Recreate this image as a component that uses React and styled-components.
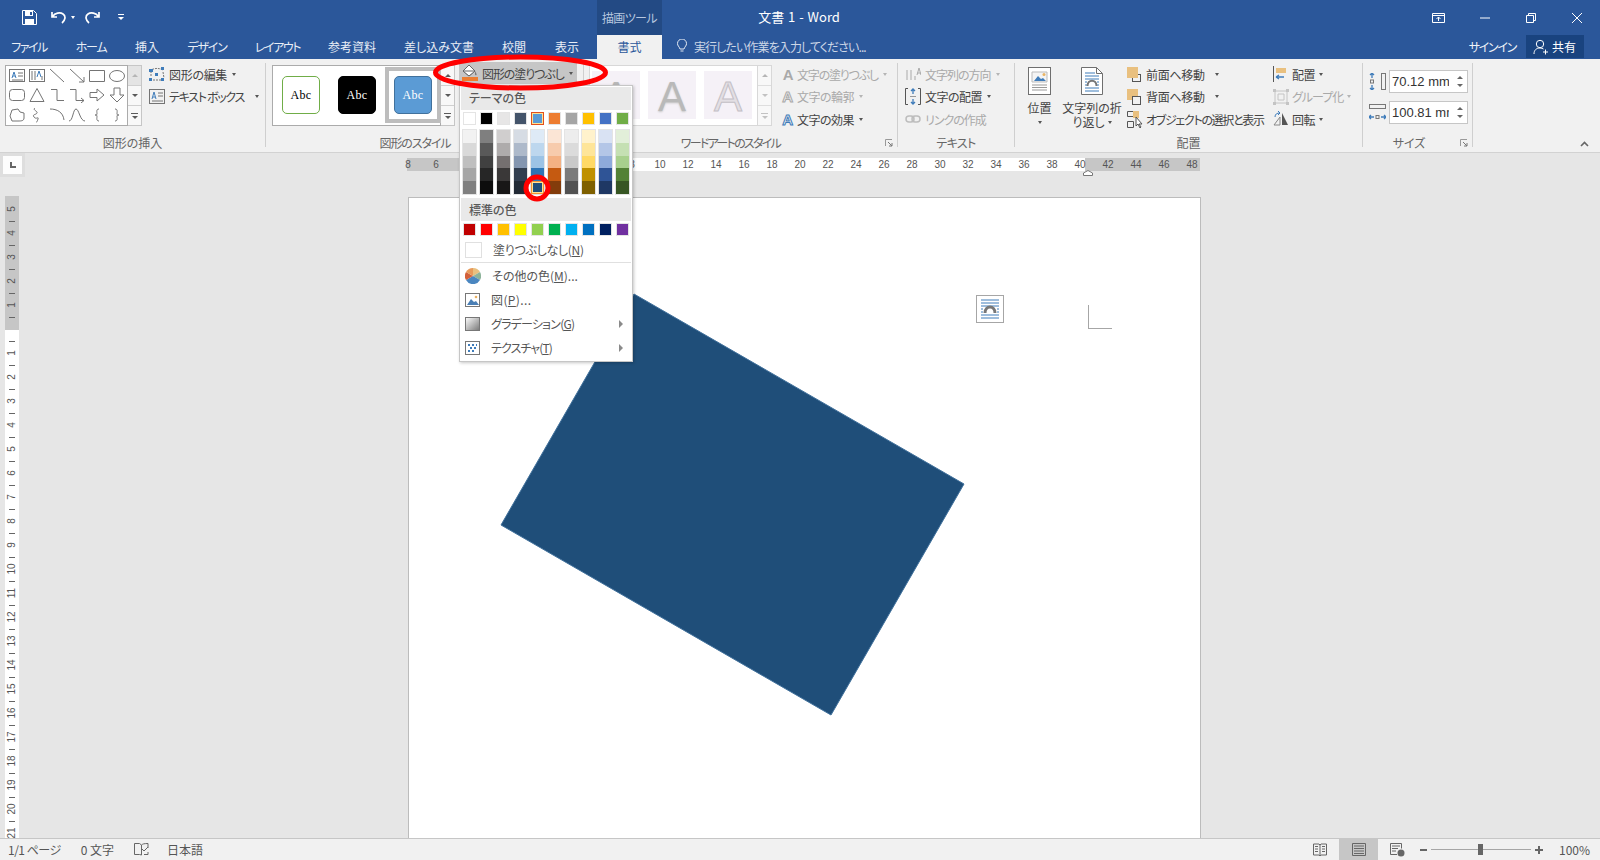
import React from "react";
import styled, { createGlobalStyle } from "styled-components";

const Global = createGlobalStyle`
  html, body { margin: 0; padding: 0; width: 1600px; height: 860px; overflow: hidden; }
  body { font-family: "Noto Sans CJK JP", "Liberation Sans", sans-serif; font-size: 12px; font-feature-settings: "palt"; color: #444; }
  * { box-sizing: border-box; }
`;

const Root = styled.div`position: relative; width: 1600px; height: 860px; display: flex; flex-direction: column; overflow: hidden; background: #e6e6e6;`;
const Icon = styled.svg`display: block; flex: none; fill: none;`;

/* ---------- title bar ---------- */
const TitleBar = styled.div`height: 35px; background: #2b579a; display: flex; align-items: stretch; color: #fff; flex: none;`;
const QuickAccess = styled.div`width: 597px; flex: none; display: flex; align-items: center; padding-left: 22px;`;
const Qa = styled.span`display: block; margin-left: ${p => p.$ml}px;`;
const ContextHead = styled.div`width: 65px; flex: none; background: #234a84; color: #b7c7df; display: flex; align-items: center; justify-content: center; font-size: 12px; letter-spacing: -.6px;`;
const DocTitle = styled.div`width: 274px; flex: none; display: flex; align-items: center; justify-content: center; font-size: 13px; color: #fff; padding-bottom: 2px; word-spacing: 1px;`;
const WindowControls = styled.div`margin-left: auto; padding-right: 18px; display: flex; align-items: center;`;
const WinBtn = styled.span`display: block; margin-left: ${p => p.$ml}px;`;

/* ---------- tab row ---------- */
const TabRow = styled.div`height: 24px; flex: none; background: #2b579a; display: flex; align-items: stretch;`;
const Tab = styled.div`width: ${p => p.$w}px; flex: none; display: flex; align-items: center; justify-content: center; color: #e9eef6; font-size: 12px; white-space: nowrap; padding-bottom: 2px; letter-spacing: ${p => p.$ls || 0}px;`;
const ActiveTab = styled.div`width: 65px; margin-left: 6px; flex: none; background: #f1f1f1; color: #2b579a; display: flex; align-items: center; justify-content: center; font-size: 12px; padding-bottom: 2px;`;
const TellMe = styled.div`display: flex; align-items: center; padding: 0 0 2px 15px; gap: 7px; color: #ccd6e6; font-size: 12px; white-space: nowrap; letter-spacing: -.9px;`;
const SignIn = styled.div`margin-left: auto; display: flex; align-items: center; color: #f0f3f8; font-size: 12px;`;
const SignInText = styled.span`display: block; padding-bottom: 2px; letter-spacing: -1.3px;`;
const ShareBtn = styled.div`align-self: stretch; margin: 0 16px 1px 10px; width: 58px; background: #19437f; color: #fff; display: flex; align-items: center; gap: 3px; padding-left: 7px; font-size: 12px;`;

/* ---------- ribbon ---------- */
const Ribbon = styled.div`height: 94px; flex: none; background: #f1f1f1; border-bottom: 1px solid #d2d2d2; display: flex; padding-top: 4px;`;
const Group = styled.div`width: ${p => p.$w}px; height: 84px; flex: none; border-right: 1px solid #cfcfcf; display: flex; flex-direction: column;`;
const GroupBody = styled.div`height: 70px; flex: none; display: flex; align-items: flex-start; padding: 1px 0 0 ${p => p.$pl || 0}px;`;
const GroupLabel = styled.div`height: 20px; line-height: 20px; text-align: center; color: #666; font-size: 12px; padding-right: ${p => p.$pr || 0}px; position: relative; white-space: nowrap; letter-spacing: ${p => p.$ls || 0}px;`;
const Launcher = styled.span`position: absolute; right: 4px; top: 6px; display: block;`;
const Collapse = styled.div`margin: 78px 11px 0 auto;`;

const Gallery = styled.div`
  display: flex; flex: none; width: ${p => p.$w}px; height: 61px; margin-top: 1px; margin-left: ${p => p.$ml || 0}px;
  background: #fff; border: 1px solid ${p => p.$muted ? "#d8d8d8" : "#ababab"};
  ${p => p.$pad && `padding: ${p.$pad};`}
  ${p => p.$gap && `gap: ${p.$gap}px;`}
`;
const ShapeGrid = styled.div`display: grid; grid-template-columns: repeat(6, 20px); grid-auto-rows: 19.6px; justify-items: center; align-items: center; padding-left: 1px;`;
const ScrollCol = styled.div`width: 14px; height: 61px; margin-top: 1px; flex: none; display: flex; flex-direction: column; border: 1px solid ${p => p.$muted ? "#d8d8d8" : "#c6c6c6"}; border-left: none;`;
const ScrollBtn = styled.div`
  flex: 1; display: flex; flex-direction: column; gap: 2px; align-items: center; justify-content: center;
  background: ${p => p.$off ? "#e4e4e4" : "#f8f8f8"};
  border-bottom: 1px solid ${p => p.$muted ? "#dedede" : "#d0d0d0"};
  &:last-child { border-bottom: none; }
`;
const ScrollLine = styled.i`display: block; width: 7px; height: 1px; background: ${p => p.$c};`;
const Tri = styled.i`display: block; width: 0; height: 0; border-left: 3px solid transparent; border-right: 3px solid transparent;
  ${p => p.$up ? `border-bottom: 3px solid ${p.$c};` : `border-top: 3px solid ${p.$c};`}`;

const Commands = styled.div`display: flex; flex-direction: column; flex: none; margin: -1px 0 0 ${p => p.$ml || 0}px; width: ${p => p.$w ? p.$w + "px" : "auto"};`;
const Cmd = styled.div`height: 22.5px; display: flex; align-items: center; gap: ${p => p.$gap ?? 4}px; white-space: nowrap; color: ${p => p.$off ? "#a9a9a9" : "#444"}; font-size: 12px; letter-spacing: ${p => p.$ls ?? -0.5}px;`;
const Caret = styled.i`display: block; flex: none; width: 0; height: 0; margin-left: ${p => p.$ml ?? 1}px; border-left: 2.5px solid transparent; border-right: 2.5px solid transparent; border-top: 3px solid ${p => p.$off ? "#b5b5b5" : "#555"};`;

const StyleItem = styled.div`width: 56px; height: 56px; flex: none; display: flex; align-items: center; justify-content: center; border: 4px solid ${p => p.$sel ? "#bdbdbd" : "transparent"};`;
const AbcBox = styled.div`width: 38px; height: 38px; border-radius: 5px; background: ${p => p.$bg}; border: 1px solid ${p => p.$line}; color: ${p => p.$fg}; font: 12px "Liberation Serif", serif; display: flex; align-items: center; justify-content: center; letter-spacing: .3px;`;
const FillBtn = styled.div`width: 118px; height: 22px; margin: -2px 0 0 4px; background: #c6c6c6; display: flex; align-items: center; gap: 4px; padding-left: 3px; font-size: 12px; color: #444; white-space: nowrap; letter-spacing: -1.1px;`;

const ArtTile = styled.div`width: 48px; height: 48px; flex: none; background: #f5f1f7; overflow: hidden; display: flex; align-items: center; justify-content: center; padding-top: 3px; font: 42px/48px "Liberation Sans", sans-serif;
  color: ${p => p.$kind === "outline" ? "#e3dfe4" : "#b9b9b9"};
  ${p => p.$kind === "outline" ? "-webkit-text-stroke: 1px #c4c0c6;" : "text-shadow: 0 1px 2px #c8c8c8;"}`;
const ArtLetter = styled.span`display: block; width: 13px; margin-right: -1px; text-align: center; font: bold 15px/15px "Liberation Sans", sans-serif; color: ${p => p.$c};
  ${p => p.$outline && `color: #f1f1f1; -webkit-text-stroke: 1px ${p.$outline};`}`;

const BigBtn = styled.div`width: ${p => p.$w}px; flex: none; display: flex; flex-direction: column; align-items: center; padding-top: 3px; white-space: nowrap; font-size: 12px; line-height: 14px; color: #444;`;
const BigIcon = styled.div`height: 28px; margin-bottom: 6px;`;
const BigLine = styled.div`display: flex; align-items: center; justify-content: center; height: 14px; gap: 2px;`;

const SizeCol = styled.div`display: flex; flex-direction: column; gap: 8px; padding-top: 6px;`;
const SizeRow = styled.div`display: flex; align-items: center; gap: 3px;`;
const SizeInput = styled.div`width: 79px; height: 23px; background: #fff; border: 1px solid #c6c6c6; display: flex; align-items: center; padding-left: 2px; font: 13px "Liberation Sans", sans-serif; color: #333;`;
const SizeValue = styled.div`width: 57px; overflow: hidden; white-space: nowrap;`;
const Spin = styled.div`margin-left: 8px; display: flex; flex-direction: column; gap: 5px;`;

/* ---------- workspace ---------- */
const Workspace = styled.div`flex: 1; min-height: 0; display: flex; overflow: hidden; background: #e6e6e6;`;
const LeftCol = styled.div`width: 25px; flex: none; display: flex; flex-direction: column;`;
const Corner = styled.div`width: 25px; height: 24px; flex: none; background: #dedede; padding: 3px; `;
const CornerInner = styled.div`width: 19px; height: 18px; background: #fdfdfd; display: flex; align-items: center; justify-content: center;`;
const VRuler = styled.div`margin: 19px 0 0 5px; width: 14px; height: 642px; flex: none; padding-top: 7px; background: linear-gradient(#c6c6c6 0 134px, #fff 134px); display: flex; flex-direction: column; overflow: hidden;`;
const VCell = styled.div`height: 12px; flex: none; display: flex; align-items: center; justify-content: center;`;
const VNum = styled.span`display: block; font: 10px/10px "Liberation Sans", sans-serif; color: #555; transform: rotate(-90deg); white-space: nowrap;`;
const VTick = styled.i`display: block; width: 6px; height: 1px; background: #666;`;
const MainCol = styled.div`flex: 1; padding-left: 382px; display: flex; flex-direction: column; min-width: 0;`;
const HRuler = styled.div`position: relative; margin-top: 5px; width: 793px; height: 13px; flex: none; display: flex; background: linear-gradient(90deg, #c6c6c6 0 113px, #fff 113px 678px, #c6c6c6 678px);`;
const HCells = styled.div`display: flex; margin-left: -13px;`;
const HCell = styled.div`width: 28px; flex: none; text-align: center; font: 10px/13px "Liberation Sans", sans-serif; color: #555;`;
const Indent = styled.svg`position: absolute; left: 676px; top: 12px; display: block;`;
const Page = styled.div`position: relative; margin: 26px 0 0 1px; width: 793px; height: 670px; flex: none; background: #fff; border: 1px solid #bcbcbc;`;
const ShapeCanvas = styled.svg`position: absolute; left: 0; top: 0; display: block;`;
const LayoutOption = styled.div`position: absolute; left: 567px; top: 97px; width: 28px; height: 28px; background: #fff; border: 1px solid #a6a6a6; display: flex; align-items: center; justify-content: center;`;
const MarginMark = styled.div`position: absolute; left: 679px; top: 107px; width: 24px; height: 24px; border-left: 1px solid #a6a6a6; border-bottom: 1px solid #a6a6a6;`;

/* ---------- status bar ---------- */
const StatusBar = styled.div`height: 22px; flex: none; background: #f1f1f1; border-top: 1px solid #c6c6c6; display: flex; align-items: stretch; color: #555; font-size: 12px;`;
const StatusText = styled.div`display: flex; align-items: center; margin-left: ${p => p.$ml}px; white-space: nowrap; letter-spacing: ${p => p.$ls || 0}px;`;
const StatusRight = styled.div`margin-left: auto; display: flex; align-items: stretch;`;
const ViewBtn = styled.div`width: 39px; display: flex; align-items: center; justify-content: center; background: ${p => p.$on ? "#c6c6c6" : "transparent"};`;
const Zoom = styled.div`display: flex; align-items: center; margin-left: 3px;`;
const ZoomTrack = styled.div`position: relative; width: 100px; height: 1px; margin: 0 4px; background: #a6a6a6;`;
const ZoomThumb = styled.i`position: absolute; left: 47px; top: -5px; width: 5px; height: 11px; background: #666;`;
const ZoomPct = styled.div`font-size: 12px; color: #555; width: 57px; padding-left: 16px; display: flex; align-items: center;`;

/* ---------- menu ---------- */
const Menu = styled.div`position: absolute; left: 459px; top: 85px; width: 174px; height: 277px; z-index: 5; background: #fff; border: 1px solid #c6c6c6; box-shadow: 1px 1px 3px rgba(0,0,0,.22); padding: 1px 1px 0; display: flex; flex-direction: column;`;
const MenuHead = styled.div`height: 23px; flex: none; margin-top: ${p => p.$mt}px; background: #e9e9e9; color: #595959; font-weight: 500; padding: 0 0 ${p => p.$pb}px 8px; display: flex; align-items: center; font-size: 12px;`;
const Swatches = styled.div`display: flex; gap: 4px; margin: 2px 0 0 2px; flex: none;`;
const Swatch = styled.i`display: block; width: 13px; height: 13px; flex: none; background: ${p => p.$c}; border: 1px solid ${p => p.$sel ? "#e2501c" : "#e4e4e4"}; ${p => p.$sel && "box-shadow: inset 0 0 0 1px #ffe294;"}`;
const Shades = styled.div`display: flex; gap: 4px; margin: 5px 0 0 2px; flex: none;`;
const ShadeCol = styled.div`width: 13px; height: 64px; flex: none; display: flex; flex-direction: column; box-shadow: 0 0 0 1px #e4e4e4; position: relative;`;
const Shade = styled.i`display: block; flex: 1; background: ${p => p.$c}; ${p => p.$sel && "box-shadow: inset 0 0 0 1px #f29436, inset 0 0 0 2px #ffe294;"}`;
const NoneRow = styled.div`height: 18px; margin-top: 5px; flex: none; display: flex; align-items: center; padding-left: 4px; gap: 11px; color: #555;`;
const NoneBox = styled.i`display: block; width: 17px; height: 16px; background: #fff; border: 1px solid #e0e0e0;`;
const MenuSep = styled.div`height: 1px; margin-top: 3px; flex: none; background: #e0e0e0;`;
const MenuRows = styled.div`margin-top: 1px; display: flex; flex-direction: column;`;
const MenuRow = styled.div`height: 24px; display: flex; align-items: center; padding: 0 8px 0 4px; gap: 11px; color: #555; white-space: nowrap;`;
const MenuLabel = styled.span`display: block; padding-bottom: 2px; letter-spacing: ${p => p.$ls || 0}px;`;
const MenuArrow = styled.i`display: block; margin-left: auto; width: 0; height: 0; border-left: 4px solid #8a8a8a; border-top: 4px solid transparent; border-bottom: 4px solid transparent;`;
const Ul = styled.span`text-decoration: underline;`;

const OvalMark = styled.svg`position: absolute; left: 428px; top: 50px; z-index: 6; display: block; pointer-events: none;`;
const RingMark = styled.svg`position: absolute; left: 522px; top: 173px; z-index: 6; display: block; pointer-events: none;`;

/* ---------- drawings ---------- */
const G = "#747474", BL = "#3f7cba", PE = "#e9c07f";
const S = ({ children, w = 16, h = 16 }) => <Icon width={w} height={h} viewBox={`0 0 ${w} ${h}`}>{children}</Icon>;
const Shape = ({ d, fill }) => <S><path d={d} stroke={G} fill={fill || "none"} /></S>;

const galleryShapes = [
  <S key="a"><rect x=".5" y="1.5" width="15" height="12" stroke={G} /><path d="M3 10 5 4l2 6M4 8h2" stroke={BL} /><path d="M9 5h5M9 8h5M3 12h11" stroke={G} /></S>,
  <S key="b"><rect x=".5" y="1.5" width="15" height="12" stroke={G} /><path d="M3 3v9M6 3v9M13 8v4" stroke={G} /><path d="M8 9 10 3l2 6" stroke={BL} /></S>,
  <Shape key="c" d="M1 1 15 14" />,
  <Shape key="d" d="M1 1 15 14M15 14v-5M15 14h-5" />,
  <Shape key="e" d="M.5 2.5h15v11H.5z" />,
  <S key="f"><ellipse cx="8" cy="8" rx="7.5" ry="5.5" stroke={G} /></S>,
  <S key="g"><rect x=".5" y="2.5" width="15" height="11" rx="3" stroke={G} /></S>,
  <Shape key="h" d="M8 1.5 15 14.5H1Z" />,
  <Shape key="i" d="M2 2.5h6v11h7" />,
  <Shape key="j" d="M1 2.5h6v11h8M12 11l3 2.5-3 2.5" />,
  <Shape key="k" d="M1 5.5h7V2l7 6-7 6v-3.5H1Z" />,
  <Shape key="l" d="M5 1h6v7h4l-7 7-7-7h4Z" />,
  <Shape key="m" d="M3 3 9 2l2 3 4 1v5c0 3-3 3-6 3H3L1 9Z" />,
  <Shape key="n" d="M6 1C3 3 9 4 8 6S3 7 5 10s5-1 4 2-1 3-2 3" />,
  <Shape key="o" d="M1 2c7 0 13 3 14 11" />,
  <Shape key="p" d="M0 14C4 14 4 2 7 2s4 12 9 12" />,
  <Shape key="q" d="M10 2C7 2 8 5 8 7c0 1-1 1-2 1 1 0 2 0 2 1 0 2-1 5 2 5" />,
  <Shape key="r" d="M6 2c3 0 2 3 2 5 0 1 1 1 2 1-1 0-2 0-2 1 0 2 1 5-2 5" />,
];

const SaveIcon = () => <Icon width="15" height="15" viewBox="0 0 15 15"><path d="M.5.5h11l3 3v11H.5Z" stroke="#fff" /><path d="M3 1h8v5H3ZM3 9h9v5H3Z" fill="#fff" /><path d="M8 2h2v3H8Z" fill="#2b579a" /></Icon>;
const UndoIcon = () => <Icon width="15" height="13" viewBox="0 0 15 13"><path d="M1 1v5h5M1.5 5.5C4 2 9 1 12 3s2.5 6-1 9" stroke="#fff" strokeWidth="1.7" /></Icon>;
const RedoIcon = () => <Icon width="15" height="13" viewBox="0 0 15 13"><path d="M14 1v5H9M13.5 5.5C11 2 6 1 3 3S.5 9 4 12" stroke="#fff" strokeWidth="1.7" /></Icon>;
const WhiteCaret = styled.i`display: block; width: 0; height: 0; border-left: 2.5px solid transparent; border-right: 2.5px solid transparent; border-top: 3px solid #fff;`;
const CustomIcon = () => <Icon width="6" height="7" viewBox="0 0 6 7"><path d="M0 .5h6" stroke="#fff" /><path d="M0 3h6L3 6Z" fill="#fff" /></Icon>;
const Bulb = () => <Icon width="10" height="14" viewBox="0 0 10 14"><path d="M3 10C2 7 .5 7 .5 4.5a4.5 4.5 0 0 1 9 0C9.500 7 8 7 7 10ZM3.500 12h3" stroke="#e4eaf3" /></Icon>;
const PersonIcon = () => <Icon width="16" height="16" viewBox="0 0 16 16"><circle cx="7" cy="5" r="3.700" stroke="#fff" /><path d="M1 15c0-4 2.500-6 6-6 1.500 0 2.500.5 3.500 1M10 13h5M12.500 10.500v5" stroke="#fff" /></Icon>;

const EditShape = () => <S h={15}><path d="M3 2.500C7 1 10 1 14 3M2 4v6M14 5l1 6M4 13h9" stroke={G} strokeDasharray="2 1" /><path d="M0 2h4v3H0zM12 0h3v3h-3zM0 11h3v3H0zM12 11h3v3h-3zM6 6h3v3H6z" fill={BL} /></S>;
const TextBoxIcon = () => <S h={15}><rect x=".5" y=".5" width="15" height="14" stroke={G} /><path d="M3 10 5 3l2 7M4 8h2" stroke={BL} /><path d="M9 4h5M9 7h5M3 12h11" stroke={G} /></S>;
const BucketIcon = () => <Icon width="16" height="16" viewBox="0 0 16 16"><path d="M7 0 13 6 7 11 1 6Z" fill="#fff" stroke="#666" /><path d="M1 6h12l-6 5Z" fill="#fff" stroke="#666" /><path d="M13 6c1 2 2 3 1.500 4-.6.6-1.500 0-1.500-1Z" fill="#777" /><path d="M0 12h16v4H0Z" fill="#ed7d31" /></Icon>;

const DirIcon = ({ c = "#a9a9a9" }) => <S><path d="M2 4v10M6 4v10M10 10v4" stroke={c} /><path d="M12 9l2-7 2 7M12.500 7h3" stroke={c} /></S>;
const AlignIcon = () => <S h={17}><path d="M3 .5H.5v16H3M13 .5h2.500v16H13" stroke="#555" /><path d="M8 1v5M6 3l2-2 2 2M8 11v5M6 14l2 2 2-2" stroke={BL} strokeWidth="1.300" /><path d="M5 8.500h6" stroke="#999" /></S>;
const LinkIcon = () => <S h={12}><rect x="1" y="3" width="8" height="6" rx="3" stroke="#bdbdbd" strokeWidth="1.500" /><rect x="7" y="3" width="8" height="6" rx="3" stroke="#bdbdbd" strokeWidth="1.500" /></S>;

const PositionIcon = () => <Icon width="23" height="28" viewBox="0 0 23 28"><rect x=".5" y=".5" width="22" height="27" fill="#fff" stroke="#6f6f6f" /><path d="M4 5h15v10H4Z" fill="#f4f4f4" stroke="#bbb" /><path d="M6 14l4-5 3 3 2-1 3 3Z" fill={BL} /><circle cx="16" cy="7.500" r="1.500" fill="#eab464" /><path d="M4 18h15M4 20.500h15M4 23h15" stroke="#9a9a9a" /></Icon>;
const WrapIcon = () => <Icon width="22" height="28" viewBox="0 0 22 28"><path d="M.5.5h15l6 6v21H.5Z" fill="#fff" stroke="#6f6f6f" /><path d="M15.500.5v6h6" stroke="#6f6f6f" /><path d="M4 6h10M4 9h14M4 12h14M4 15h2M16 15h2M4 18h2M16 18h2M4 21h14M4 24h14" stroke={BL} /><path d="M6.500 19c0-7 9-7 9 0" stroke="#777" strokeWidth="2" /></Icon>;
const FrontIcon = () => <S h={15}><rect x="5.500" y="7.500" width="8" height="7" fill="none" stroke="#555" /><rect x="0" y="0" width="11" height="11" fill={PE} /></S>;
const BackIcon = () => <S h={16}><rect x="0" y="0" width="11" height="11" fill={PE} /><rect x="5.500" y="7.500" width="8" height="8" fill="#f1f1f1" stroke="#555" /></S>;
const SelectIcon = () => <S h={17}><path d="M.5.5h6v5h-6ZM.5 10.500h6v6h-6Z" stroke="#555" /><path d="M6 0h6v7H6Z" fill={PE} /><path d="M9 6v9l2-2 2 4 1-1-2-3h3Z" fill="#fff" stroke="#555" /></S>;
const ArrangeIcon = () => <S><path d="M.5 0v16" stroke="#555" /><path d="M3 2h10v5H3Z" fill={PE} /><path d="M3 11h8M3 11l3-2M3 11l3 2" stroke={BL} strokeWidth="1.300" /></S>;
const GroupIcon = () => <S><path d="M2 3v10M14 3v10M3 2h10M3 14h10" stroke="#c4c4c4" /><path d="M0 0h3v3H0zM13 0h3v3h-3zM0 13h3v3H0zM13 13h3v3h-3z" fill="#c4c4c4" /><path d="M5 5h6v6H5Z" stroke="#c4c4c4" /></S>;
const RotateIcon = () => <S><path d="M1 14 7 6v8Z" stroke="#888" /><path d="M9 2v12h6Z" fill="#555" /><path d="M2 6c0-3 2-4 5-4M5 0l2 2-2 2" stroke={BL} /></S>;
const HeightIcon = () => <Icon width="17" height="17" viewBox="0 0 17 17"><rect x="12.500" y=".5" width="4" height="16" stroke="#777" /><path d="M3 0v5M1 2l2-2 2 2M3 12v5M1 15l2 2 2-2" stroke={BL} strokeWidth="1.300" /><rect x="1.500" y="7" width="3" height="3" stroke="#777" /></Icon>;
const WidthIcon = () => <Icon width="17" height="17" viewBox="0 0 17 17"><rect x=".5" y=".5" width="16" height="4" stroke="#777" /><path d="M0 13h5M2 11l-2 2 2 2M12 13h5M15 11l2 2-2 2" stroke={BL} strokeWidth="1.300" /><rect x="7" y="11.500" width="3" height="3" stroke="#777" /></Icon>;
const LauncherIcon = () => <Icon width="8" height="8" viewBox="0 0 8 8"><path d="M.5 7V.5H7" stroke="#999" /><path d="M3 3l4 4M7 4v3H4" stroke="#777" /></Icon>;

const PieIcon = () => <Icon width="16" height="16" viewBox="0 0 16 16"><path d="M8 8V0A8 8 0 0 1 15 4Z" fill="#e9c07f" /><path d="M8 8l7-4a8 8 0 0 1 0 8Z" fill="#8db39a" /><path d="M8 8l7 4a8 8 0 0 1-14 0Z" fill="#4a86c0" /><path d="M8 8l-7 4a8 8 0 0 1 0-8Z" fill="#d2603a" /><path d="M8 8 1 4a8 8 0 0 1 7-4Z" fill="#e89a5a" /></Icon>;
const PicIcon = () => <Icon width="15" height="14" viewBox="0 0 15 14"><rect x=".5" y=".5" width="14" height="13" fill="#fff" stroke="#777" /><path d="M2 12 6 6l3 3 2-1 3 4Z" fill="#4a7fb5" /><circle cx="11" cy="4" r="1.300" fill="#e9b060" /></Icon>;
const GradIcon = () => <Icon width="15" height="14" viewBox="0 0 15 14"><defs><linearGradient id="gd" x1="0" y1="0" x2="1" y2="1"><stop offset="0" stopColor="#fff" /><stop offset="1" stopColor="#777" /></linearGradient></defs><rect x=".5" y=".5" width="14" height="13" fill="url(#gd)" stroke="#777" /></Icon>;
const TexIcon = () => <Icon width="15" height="14" viewBox="0 0 15 14"><rect x=".5" y=".5" width="14" height="13" fill="#fff" stroke="#777" /><path d="M3 3h2v2H3zM7 3h2v2H7zM11 3h1v2h-1zM5 6h2v2H5zM9 6h2v2H9zM3 9h2v2H3zM7 9h2v2H7z" fill="#3f7cba" /></Icon>;

const themeColors = ["#ffffff", "#000000", "#e7e6e6", "#44546a", "#5b9bd5", "#ed7d31", "#a5a5a5", "#ffc000", "#4472c4", "#70ad47"];
const shadeColors = [
  ["#f2f2f2", "#d9d9d9", "#bfbfbf", "#a6a6a6", "#808080"],
  ["#7f7f7f", "#595959", "#404040", "#262626", "#0d0d0d"],
  ["#d0cece", "#aeabab", "#757070", "#3a3838", "#181717"],
  ["#d6dce4", "#adb9ca", "#8496b0", "#323e4f", "#222a35"],
  ["#deeaf6", "#bdd7ee", "#9cc3e5", "#2e75b5", "#1f4e79"],
  ["#fbe5d5", "#f7cbac", "#f4b183", "#c55a11", "#833c0b"],
  ["#ededed", "#dbdbdb", "#c9c9c9", "#7b7b7b", "#525252"],
  ["#fff2cc", "#fee599", "#ffd965", "#bf9000", "#7f6000"],
  ["#d9e2f3", "#b4c6e7", "#8eaadb", "#2f5496", "#1f3864"],
  ["#e2efd9", "#c5e0b3", "#a8d08d", "#538135", "#375623"],
];
const standardColors = ["#c00000", "#ff0000", "#ffc000", "#ffff00", "#92d050", "#00b050", "#00b0f0", "#0070c0", "#002060", "#7030a0"];

const tabs = [["ファイル", 58, -1.5], ["ホーム", 66, -1.2], ["挿入", 46, 0], ["デザイン", 74, -1.2], ["レイアウト", 67, -1.4], ["参考資料", 82, 0], ["差し込み文書", 92, 0], ["校閲", 58, 0], ["表示", 48, 0]];

const hNums = [8, 6, 4, 2, ""].concat(Array.from({ length: 24 }, (_, i) => (i + 1) * 2));
const vItems = [];
[5, 4, 3, 2, 1].forEach(n => { vItems.push(n); vItems.push("-"); });
vItems.push("");
for (let n = 1; n <= 21; n++) { vItems.push("-"); vItems.push(n); }

const Scroll = ({ off, muted }) => {
  const c = muted ? "#c2c2c2" : "#5a5a5a";
  return (
    <ScrollCol $muted={muted}>
      <ScrollBtn $off={off} $muted={muted}><Tri $up $c={off || muted ? "#b5b5b5" : c} /></ScrollBtn>
      <ScrollBtn $muted={muted}><Tri $c={c} /></ScrollBtn>
      <ScrollBtn $muted={muted}><ScrollLine $c={c} /><Tri $c={c} /></ScrollBtn>
    </ScrollCol>
  );
};

export default function App() {
  return (
    <Root>
      <Global />
      <TitleBar>
        <QuickAccess>
          <SaveIcon />
          <Qa $ml={14}><UndoIcon /></Qa>
          <Qa $ml={5}><WhiteCaret /></Qa>
          <Qa $ml={10}><RedoIcon /></Qa>
          <Qa $ml={18}><CustomIcon /></Qa>
        </QuickAccess>
        <ContextHead>描画ツール</ContextHead>
        <DocTitle>文書 1 - Word</DocTitle>
        <WindowControls>
          <WinBtn $ml={0}><Icon width="13" height="10" viewBox="0 0 13 10"><path d="M.5.5h12v9H.5ZM.5 2.500h12M6.500 8V4M4.500 6l2-2 2 2" stroke="#fff" /></Icon></WinBtn>
          <WinBtn $ml={35}><Icon width="10" height="2" viewBox="0 0 10 2"><path d="M0 1h10" stroke="#fff" /></Icon></WinBtn>
          <WinBtn $ml={36}><Icon width="10" height="10" viewBox="0 0 10 10"><path d="M.5 2.500h7v7h-7ZM2.500 2.500v-2h7v7h-2" stroke="#fff" /></Icon></WinBtn>
          <WinBtn $ml={36}><Icon width="10" height="10" viewBox="0 0 10 10"><path d="M0 0l10 10M10 0 0 10" stroke="#fff" /></Icon></WinBtn>
        </WindowControls>
      </TitleBar>

      <TabRow>
        {tabs.map(([t, w, ls]) => <Tab key={t} $w={w} $ls={ls}>{t}</Tab>)}
        <ActiveTab>書式</ActiveTab>
        <TellMe><Bulb />実行したい作業を入力してください...</TellMe>
        <SignIn>
          <SignInText>サインイン</SignInText>
          <ShareBtn><PersonIcon />共有</ShareBtn>
        </SignIn>
      </TabRow>

      <Ribbon>
        <Group $w={266}>
          <GroupBody $pl={5}>
            <Gallery $w={123}>
              <ShapeGrid>{galleryShapes}</ShapeGrid>
            </Gallery>
            <Scroll off />
            <Commands $ml={7}>
              <Cmd $ls={-0.3}><EditShape />図形の編集<Caret /></Cmd>
              <Cmd $ls={-1.3}><TextBoxIcon />テキスト ボックス<Caret $ml={7} /></Cmd>
            </Commands>
          </GroupBody>
          <GroupLabel>図形の挿入</GroupLabel>
        </Group>

        <Group $w={318}>
          <GroupBody $pl={6}>
            <Gallery $w={169} $pad="1px 0 0 0">
              <StyleItem><AbcBox $bg="#fff" $line="#70ad47" $fg="#000">Abc</AbcBox></StyleItem>
              <StyleItem><AbcBox $bg="#000" $line="#000" $fg="#fff">Abc</AbcBox></StyleItem>
              <StyleItem $sel><AbcBox $bg="#5b9bd5" $line="#41719c" $fg="#fff">Abc</AbcBox></StyleItem>
            </Gallery>
            <Scroll />
            <FillBtn><BucketIcon />図形の塗りつぶし<Caret /></FillBtn>
          </GroupBody>
          <GroupLabel $pr={19} $ls={-1.1}>図形のスタイル</GroupLabel>
        </Group>

        <Group $w={314}>
          <GroupBody $pl={5}>
            <Gallery $w={169} $muted $pad="5px 0 0 2px" $gap={8}>
              <ArtTile>A</ArtTile>
              <ArtTile>A</ArtTile>
              <ArtTile $kind="outline">A</ArtTile>
            </Gallery>
            <Scroll muted />
            <Commands $ml={9}>
              <Cmd $off $ls={-1.2}><ArtLetter $c="#a9a9a9">A</ArtLetter>文字の塗りつぶし<Caret $off /></Cmd>
              <Cmd $off><ArtLetter $outline="#a9a9a9">A</ArtLetter>文字の輪郭<Caret $off /></Cmd>
              <Cmd><ArtLetter $outline="#3f7cba">A</ArtLetter>文字の効果<Caret /></Cmd>
            </Commands>
          </GroupBody>
          <GroupLabel $pr={20} $ls={-1.7}>ワードアートのスタイル<Launcher><LauncherIcon /></Launcher></GroupLabel>
        </Group>

        <Group $w={117}>
          <GroupBody $pl={7}>
            <Commands>
              <Cmd $off $ls={-1}><DirIcon />文字列の方向<Caret $off /></Cmd>
              <Cmd><AlignIcon />文字の配置<Caret /></Cmd>
              <Cmd $off $ls={-1}><LinkIcon />リンクの作成</Cmd>
            </Commands>
          </GroupBody>
          <GroupLabel $ls={-0.6}>テキスト</GroupLabel>
        </Group>

        <Group $w={348}>
          <GroupBody>
            <BigBtn $w={49}>
              <BigIcon><PositionIcon /></BigIcon>
              <BigLine>位置</BigLine>
              <BigLine><Caret $ml={0} /></BigLine>
            </BigBtn>
            <BigBtn $w={56}>
              <BigIcon><WrapIcon /></BigIcon>
              <BigLine>文字列の折</BigLine>
              <BigLine>り返し<Caret /></BigLine>
            </BigBtn>
            <Commands $ml={7} $w={146}>
              <Cmd $gap={3} $ls={-0.3}><FrontIcon />前面へ移動<Caret $ml={7} /></Cmd>
              <Cmd $gap={3} $ls={-0.3}><BackIcon />背面へ移動<Caret $ml={7} /></Cmd>
              <Cmd $gap={3} $ls={-1.3}><SelectIcon />オブジェクトの選択と表示</Cmd>
            </Commands>
            <Commands>
              <Cmd $gap={3}><ArrangeIcon />配置<Caret /></Cmd>
              <Cmd $off $gap={3} $ls={-1}><GroupIcon />グループ化<Caret $off /></Cmd>
              <Cmd $gap={3}><RotateIcon />回転<Caret /></Cmd>
            </Commands>
          </GroupBody>
          <GroupLabel>配置</GroupLabel>
        </Group>

        <Group $w={110}>
          <GroupBody $pl={6}>
            <SizeCol>
              <SizeRow><HeightIcon /><SizeInput><SizeValue>70.12 mm</SizeValue><Spin><Tri $up $c="#666" /><Tri $c="#666" /></Spin></SizeInput></SizeRow>
              <SizeRow><WidthIcon /><SizeInput><SizeValue>100.81 mm</SizeValue><Spin><Tri $up $c="#666" /><Tri $c="#666" /></Spin></SizeInput></SizeRow>
            </SizeCol>
          </GroupBody>
          <GroupLabel $pr={17}>サイズ<Launcher><LauncherIcon /></Launcher></GroupLabel>
        </Group>

        <Collapse><Icon width="9" height="6" viewBox="0 0 9 6"><path d="M1 5l3.500-3.500L8 5" stroke="#666" strokeWidth="1.600" /></Icon></Collapse>
      </Ribbon>

      <Workspace>
        <LeftCol>
          <Corner><CornerInner><Icon width="6" height="6" viewBox="0 0 6 6"><path d="M1 0v5h5" stroke="#666" strokeWidth="2" /></Icon></CornerInner></Corner>
          <VRuler>
            {vItems.map((v, i) => <VCell key={i}>{v === "-" ? <VTick /> : <VNum>{v}</VNum>}</VCell>)}
          </VRuler>
        </LeftCol>
        <MainCol>
          <HRuler>
            <HCells>{hNums.map((n, i) => <HCell key={i}>{n}</HCell>)}</HCells>
            <Indent width="10" height="6" viewBox="0 0 10 6"><path d="M.5 5.500V3L5 .5 9.500 3v2.500Z" fill="#fff" stroke="#777" /></Indent>
          </HRuler>
          <Page>
            <ShapeCanvas width="791" height="640" viewBox="0 0 791 640"><polygon points="225,96 555,286 422,517 92,327" fill="#1f4e79" stroke="#41719c" /></ShapeCanvas>
            <LayoutOption>
              <Icon width="20" height="20" viewBox="0 0 20 20"><path d="M1 1h18M1 4h18M1 7h18M1 10h2M17 10h2M1 13h2M17 13h2M1 16h18M1 19h18" stroke="#3f7cba" /><path d="M5 14c0-8 10-8 10 0" stroke="#777" strokeWidth="3" /></Icon>
            </LayoutOption>
            <MarginMark />
          </Page>
        </MainCol>
      </Workspace>

      <StatusBar>
        <StatusText $ml={8} $ls={-0.5}>1/1 ページ</StatusText>
        <StatusText $ml={20}>0 文字</StatusText>
        <StatusText $ml={20}><Icon width="15" height="14" viewBox="0 0 15 14"><path d="M5.500 11.500H.5V.5h5l2 1.500v10ZM7.500 2C8.500 1 10 .5 14 .5V5M14 9v2.500H10" stroke="#666" /><path d="M8 6l2 2 4-4" stroke="#666" /></Icon></StatusText>
        <StatusText $ml={18}>日本語</StatusText>
        <StatusRight>
          <ViewBtn><Icon width="14" height="14" viewBox="0 0 14 14"><path d="M.5 1h5.500l1 1 1-1h5.500v11H8l-1 1-1-1H.5ZM7 2v11M2 3.500h3M2 6h3M2 8.500h3M9 3.500h3M9 6h3M9 8.500h3" stroke="#666" /></Icon></ViewBtn>
          <ViewBtn $on><Icon width="14" height="13" viewBox="0 0 14 13"><path d="M.5.5h13v12H.5ZM2 3h10M2 5.500h10M2 8h10M2 10.500h10" stroke="#666" /></Icon></ViewBtn>
          <ViewBtn><Icon width="15" height="14" viewBox="0 0 15 14"><path d="M7 11.500H.5V.5h11v5M2 3h8M2 5.500h6M2 8h4" stroke="#666" /><circle cx="11" cy="10" r="3.500" fill="#666" /></Icon></ViewBtn>
          <Zoom>
            <Icon width="7" height="2" viewBox="0 0 7 2"><path d="M0 1h7" stroke="#666" strokeWidth="2" /></Icon>
            <ZoomTrack><ZoomThumb /></ZoomTrack>
            <Icon width="8" height="8" viewBox="0 0 8 8"><path d="M0 4h8M4 0v8" stroke="#666" strokeWidth="2" /></Icon>
          </Zoom>
          <ZoomPct>100%</ZoomPct>
        </StatusRight>
      </StatusBar>

      <Menu>
        <MenuHead $mt={0} $pb={2}>テーマの色</MenuHead>
        <Swatches>{themeColors.map((c, i) => <Swatch key={c} $c={c} $sel={i === 4} />)}</Swatches>
        <Shades>
          {shadeColors.map((col, i) => (
            <ShadeCol key={i}>{col.map((c, j) => <Shade key={c} $c={c} $sel={i === 4 && j === 4} />)}</ShadeCol>
          ))}
        </Shades>
        <MenuHead $mt={4} $pb={1}>標準の色</MenuHead>
        <Swatches>{standardColors.map(c => <Swatch key={c} $c={c} />)}</Swatches>
        <NoneRow><NoneBox /><MenuLabel $ls={-0.3}>塗りつぶしなし(<Ul>N</Ul>)</MenuLabel></NoneRow>
        <MenuSep />
        <MenuRows>
          <MenuRow><PieIcon /><MenuLabel>その他の色(<Ul>M</Ul>)...</MenuLabel></MenuRow>
          <MenuRow><PicIcon /><MenuLabel $ls={0.4}>図(<Ul>P</Ul>)...</MenuLabel></MenuRow>
          <MenuRow><GradIcon /><MenuLabel $ls={-0.8}>グラデーション(<Ul>G</Ul>)</MenuLabel><MenuArrow /></MenuRow>
          <MenuRow><TexIcon /><MenuLabel $ls={-0.9}>テクスチャ(<Ul>T</Ul>)</MenuLabel><MenuArrow /></MenuRow>
        </MenuRows>
      </Menu>

      <OvalMark width="190" height="46" viewBox="0 0 190 46"><ellipse cx="92.500" cy="22.500" rx="85" ry="15.500" fill="none" stroke="#f00" strokeWidth="5" /></OvalMark>
      <RingMark width="30" height="30" viewBox="0 0 30 30"><circle cx="15" cy="15" r="11" fill="none" stroke="#f00" strokeWidth="5" /></RingMark>
    </Root>
  );
}
